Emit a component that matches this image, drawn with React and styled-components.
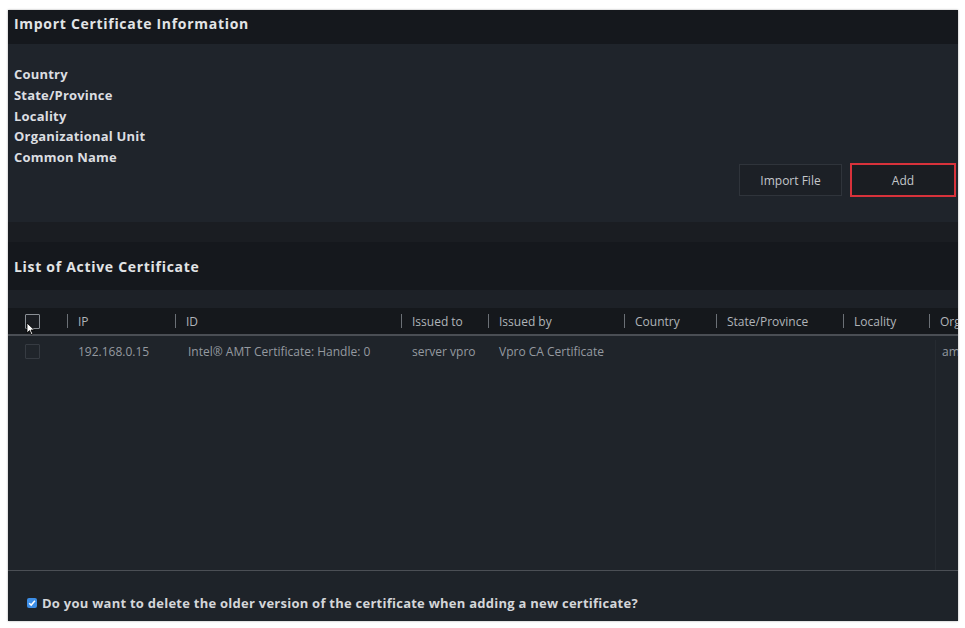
import React from "react";
import styled, { createGlobalStyle } from "styled-components";

const Global = createGlobalStyle`
  html, body { margin: 0; padding: 0; background: #ffffff; }
  body { font-family: "Open Sans", "Liberation Sans", sans-serif; }
  * { box-sizing: border-box; }
`;

const Page = styled.div`
  width: 965px;
  height: 628px;
  padding: 10px 7px 7px 8px;
  background: #ffffff;
`;

const Panel = styled.div`
  position: relative;
  width: 950px;
  height: 611px;
  background: #1f242a;
  display: flex;
  flex-direction: column;
  box-shadow: 0 0 2px rgba(0, 0, 0, 0.35);
  overflow: hidden;
`;

const SectionHeader = styled.div`
  height: ${(p) => p.$h}px;
  background: #15181d;
  display: flex;
  align-items: center;
  padding-left: 6px;
  padding-bottom: ${(p) => p.$pb || 0}px;
  color: #e2e4e6;
  font-weight: 700;
  font-size: 14px;
  letter-spacing: 0.7px;
`;

const Info = styled.div`
  height: 178px;
  display: flex;
  justify-content: space-between;
  background: #1f242b;
`;

const Labels = styled.div`
  padding: 20px 0 0 6px;
  display: flex;
  flex-direction: column;
`;

const Label = styled.div`
  line-height: 20.75px;
  font-size: 13px;
  font-weight: 700;
  letter-spacing: 0.2px;
  color: #dcdee1;
`;

const Buttons = styled.div`
  align-self: flex-end;
  display: flex;
  align-items: center;
  gap: 8px;
  padding: 0 2px 25px 0;
`;

const Button = styled.button`
  width: ${(p) => p.$w}px;
  height: ${(p) => (p.$active ? 34 : 32)}px;
  background: ${(p) => (p.$active ? "#1a1d22" : "#1c2026")};
  border: ${(p) => (p.$active ? "2px solid #d8323b" : "1px solid #2f343b")};
  color: #c4c7cb;
  font-family: "Open Sans", "Liberation Sans", sans-serif;
  font-size: 12px;
  padding: 0;
`;

const Band = styled.div`
  height: ${(p) => p.$h}px;
  background: ${(p) => p.$bg};
`;

const Row = styled.div`
  display: grid;
  grid-template-columns: 59px 108px 226px 87px 136px 92px 127px 86px 40px;
  height: ${(p) => p.$h}px;
  align-items: center;
  background: ${(p) => p.$bg || "transparent"};
  border-bottom: ${(p) => (p.$head ? "2px solid #4a4e54" : "none")};
  color: ${(p) => (p.$head ? "#b0b4b9" : "#959aa0")};
  font-size: 12px;
  white-space: nowrap;
`;

const Cell = styled.div`
  position: relative;
  padding-left: ${(p) => p.$pl ?? 11}px;
  overflow: hidden;
  height: 100%;
  display: flex;
  align-items: center;
  &::before {
    content: "";
    display: ${(p) => (p.$sep ? "block" : "none")};
    position: absolute;
    left: 0;
    top: 6px;
    bottom: 6px;
    width: 1px;
    background: #6b7076;
  }
`;

const Box = styled.span`
  width: 15px;
  height: 15px;
  border: 1px solid ${(p) => (p.$faint ? "#363b42" : "#8a8f95")};
  background: ${(p) => (p.$faint ? "#20252b" : "#1a1d22")};
  border-radius: 1px;
`;

const Body = styled.div`
  height: 234px;
  background: #1f242a;
  position: relative;
  &::after {
    content: "";
    position: absolute;
    left: 927px;
    top: 4px;
    bottom: 0;
    width: 1px;
    background: #262b31;
  }
`;

const Divider = styled.div`
  height: 1px;
  background: #4b4f55;
`;

const Footer = styled.div`
  height: 50px;
  padding: 24px 0 0 19px;
  background: #1e2329;
  display: flex;
  align-items: flex-start;
  gap: 5px;
`;

const CheckMark = styled.span`
  width: 10px;
  height: 10px;
  margin-top: 3px;
  background: #3d8ee6;
  border-radius: 2px;
  display: flex;
  align-items: center;
  justify-content: center;
`;

const FooterText = styled.span`
  line-height: 16px;
  font-size: 13px;
  font-weight: 700;
  color: #d4d6d9;
  letter-spacing: 0.25px;
  white-space: nowrap;
`;

const Cursor = styled.svg`
  position: absolute;
  left: 18px;
  top: 312px;
`;

const headers = ["IP", "ID", "Issued to", "Issued by", "Country", "State/Province", "Locality", "Organizational Unit"];
const row = ["192.168.0.15", "Intel® AMT Certificate: Handle: 0", "server vpro", "Vpro CA Certificate", "", "", "", "amt"];

export default function App() {
  return (
    <Page>
      <Global />
      <Panel>
        <SectionHeader $h={34} $pb={8}>Import Certificate Information</SectionHeader>
        <Info>
          <Labels>
            <Label>Country</Label>
            <Label>State/Province</Label>
            <Label>Locality</Label>
            <Label>Organizational Unit</Label>
            <Label>Common Name</Label>
          </Labels>
          <Buttons>
            <Button $w={103}>Import File</Button>
            <Button $w={106} $active>Add</Button>
          </Buttons>
        </Info>
        <Band $h={20} $bg="#1a1d22" />
        <SectionHeader $h={48} $pb={0}>List of Active Certificate</SectionHeader>
        <Band $h={18} $bg="#1d2127" />
        <Row $h={28} $head $bg="#15181c">
          <Cell $pl={17}><Box /></Cell>
          {headers.map((h) => (
            <Cell key={h} $sep>{h}</Cell>
          ))}
        </Row>
        <Body>
          <Row $h={30}>
            <Cell $pl={17}><Box $faint /></Cell>
            {row.map((v, i) => (
              <Cell key={i} $pl={i === 1 ? 13 : i === 7 ? 13 : 11}>{v}</Cell>
            ))}
          </Row>
        </Body>
        <Divider />
        <Footer>
          <CheckMark>
            <svg width="8" height="8" viewBox="0 0 8 8">
              <path d="M1.2 4.2 L3.2 6.1 L6.9 1.8" fill="none" stroke="#ffffff" strokeWidth="1.5" />
            </svg>
          </CheckMark>
          <FooterText>Do you want to delete the older version of the certificate when adding a new certificate?</FooterText>
        </Footer>
        <Cursor width="10" height="14" viewBox="0 0 10 14">
          <path d="M1 1 L1 11 L3.5 8.6 L5.3 12.6 L6.8 11.9 L5 8 L8.4 8 Z" fill="#ffffff" stroke="#000000" strokeWidth="0.8" />
        </Cursor>
      </Panel>
    </Page>
  );
}
